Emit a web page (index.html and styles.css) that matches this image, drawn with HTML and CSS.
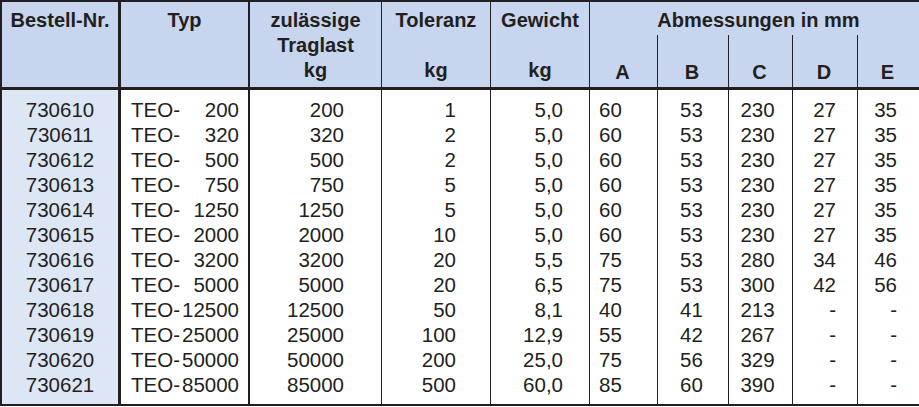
FILE: index.html
```html
<!DOCTYPE html>
<html lang="de">
<head>
<meta charset="utf-8">
<title>TEO Tabelle</title>
<link rel="stylesheet" href="styles.css">
</head>
<body>
<div class="sheet">
  <div class="head">
    <div class="hc c1 span2">Bestell-Nr.</div>
    <div class="hc c2 span2">Typ</div>
    <div class="hc c3 span2 stack"><span>zulässige</span><span>Traglast</span><span>kg</span></div>
    <div class="hc c4 span2 stack"><span>Toleranz</span><span>kg</span></div>
    <div class="hc c5 span2 stack"><span>Gewicht</span><span>kg</span></div>
    <div class="hc dims">Abmessungen in mm</div>
    <div class="hc sub">A</div>
    <div class="hc sub">B</div>
    <div class="hc sub">C</div>
    <div class="hc sub">D</div>
    <div class="hc sub">E</div>
  </div>
  <div class="body">
    <div class="row first"><div class="c1">730610</div><div class="c2"><span>TEO-</span><span>200</span></div><div class="c3">200</div><div class="c4">1</div><div class="c5">5,0</div><div class="ca">60</div><div class="cb">53</div><div class="cc">230</div><div class="cd">27</div><div class="ce">35</div></div>
    <div class="row"><div class="c1">730611</div><div class="c2"><span>TEO-</span><span>320</span></div><div class="c3">320</div><div class="c4">2</div><div class="c5">5,0</div><div class="ca">60</div><div class="cb">53</div><div class="cc">230</div><div class="cd">27</div><div class="ce">35</div></div>
    <div class="row"><div class="c1">730612</div><div class="c2"><span>TEO-</span><span>500</span></div><div class="c3">500</div><div class="c4">2</div><div class="c5">5,0</div><div class="ca">60</div><div class="cb">53</div><div class="cc">230</div><div class="cd">27</div><div class="ce">35</div></div>
    <div class="row"><div class="c1">730613</div><div class="c2"><span>TEO-</span><span>750</span></div><div class="c3">750</div><div class="c4">5</div><div class="c5">5,0</div><div class="ca">60</div><div class="cb">53</div><div class="cc">230</div><div class="cd">27</div><div class="ce">35</div></div>
    <div class="row"><div class="c1">730614</div><div class="c2"><span>TEO-</span><span>1250</span></div><div class="c3">1250</div><div class="c4">5</div><div class="c5">5,0</div><div class="ca">60</div><div class="cb">53</div><div class="cc">230</div><div class="cd">27</div><div class="ce">35</div></div>
    <div class="row"><div class="c1">730615</div><div class="c2"><span>TEO-</span><span>2000</span></div><div class="c3">2000</div><div class="c4">10</div><div class="c5">5,0</div><div class="ca">60</div><div class="cb">53</div><div class="cc">230</div><div class="cd">27</div><div class="ce">35</div></div>
    <div class="row"><div class="c1">730616</div><div class="c2"><span>TEO-</span><span>3200</span></div><div class="c3">3200</div><div class="c4">20</div><div class="c5">5,5</div><div class="ca">75</div><div class="cb">53</div><div class="cc">280</div><div class="cd">34</div><div class="ce">46</div></div>
    <div class="row"><div class="c1">730617</div><div class="c2"><span>TEO-</span><span>5000</span></div><div class="c3">5000</div><div class="c4">20</div><div class="c5">6,5</div><div class="ca">75</div><div class="cb">53</div><div class="cc">300</div><div class="cd">42</div><div class="ce">56</div></div>
    <div class="row"><div class="c1">730618</div><div class="c2"><span>TEO-</span><span>12500</span></div><div class="c3">12500</div><div class="c4">50</div><div class="c5">8,1</div><div class="ca">40</div><div class="cb">41</div><div class="cc">213</div><div class="cd">-</div><div class="ce">-</div></div>
    <div class="row"><div class="c1">730619</div><div class="c2"><span>TEO-</span><span>25000</span></div><div class="c3">25000</div><div class="c4">100</div><div class="c5">12,9</div><div class="ca">55</div><div class="cb">42</div><div class="cc">267</div><div class="cd">-</div><div class="ce">-</div></div>
    <div class="row"><div class="c1">730620</div><div class="c2"><span>TEO-</span><span>50000</span></div><div class="c3">50000</div><div class="c4">200</div><div class="c5">25,0</div><div class="ca">75</div><div class="cb">56</div><div class="cc">329</div><div class="cd">-</div><div class="ce">-</div></div>
    <div class="row last"><div class="c1">730621</div><div class="c2"><span>TEO-</span><span>85000</span></div><div class="c3">85000</div><div class="c4">500</div><div class="c5">60,0</div><div class="ca">85</div><div class="cb">60</div><div class="cc">390</div><div class="cd">-</div><div class="ce">-</div></div>
  </div>
</div>
</body>
</html>
```

FILE: styles.css
```css
* {
  box-sizing: border-box;
  margin: 0;
  padding: 0;
}

body {
  margin: 0;
  background: #ffffff;
  font-family: "Liberation Sans", Arial, sans-serif;
  color: #231f20;
}

.sheet {
  width: 919px;
  border-top: 2px solid #231f20;
  border-left: 2px solid #231f20;
  border-bottom: 2px solid #231f20;
}

.head,
.body {
  display: grid;
  grid-template-columns: 116px 130px 133px 109px 99px 68px 71px 64px 65px 62px;
}

/* Header */
.head {
  grid-template-rows: 33px 52px;
  background: #c7d6ee;
  border-bottom: 3px solid #231f20;
  font-weight: bold;
  font-size: 20px;
  line-height: 25px;
}

.hc {
  text-align: center;
  padding-top: 6px;
}

.span2 {
  grid-row: span 2;
}

.stack {
  display: flex;
  flex-direction: column;
  justify-content: space-between;
  align-items: center;
  padding-bottom: 4px;
}

.head .c2 { border-left: 3px solid #231f20; }
.head .c3 { border-left: 2px solid #231f20; }
.head .c4,
.head .c5,
.head .dims,
.head .sub { border-left: 1px solid #231f20; }

.dims {
  grid-column: span 5;
  padding-left: 8px;
}

.sub {
  padding-top: 25px;
  padding-right: 2px;
}

/* Body */
.body {
  font-size: 20.5px;
  line-height: 25px;
}

.row {
  display: contents;
}

.row.first > div { padding-top: 7px; }
.row.last > div { padding-bottom: 7px; }

.body .c1 {
  background: #dde6f5;
  text-align: center;
}

.body .c2 {
  border-left: 3px solid #231f20;
  display: flex;
  justify-content: space-between;
  padding-left: 10px;
  padding-right: 9px;
}

.body .c3 {
  border-left: 2px solid #231f20;
  text-align: right;
  padding-right: 37px;
}

.body .c4,
.body .c5,
.body .ca,
.body .cb,
.body .cc,
.body .cd,
.body .ce {
  border-left: 1px solid #231f20;
}

.body .c4 { text-align: right; padding-right: 34px; }
.body .c5 { text-align: right; padding-right: 26px; }
.body .ca { text-align: left; padding-left: 9px; }
.body .cb { text-align: center; padding-right: 3px; }
.body .cc { text-align: center; padding-right: 6px; }
.body .cd { text-align: right; padding-right: 21px; }
.body .ce { text-align: right; padding-right: 22px; }
```
